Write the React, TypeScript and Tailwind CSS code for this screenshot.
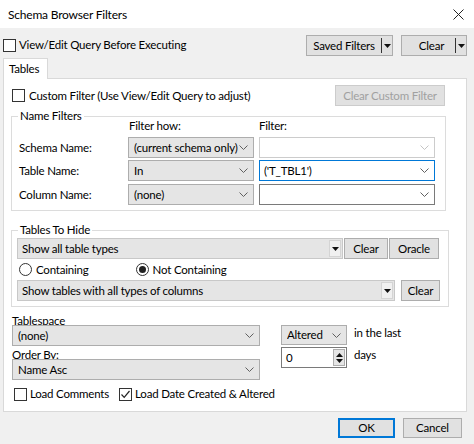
import React from "react"

const font = { fontFamily: 'Lato, "Noto Sans", sans-serif' }

function Chevron({ light }: { light?: boolean }) {
  return (
    <svg width="9" height="5" viewBox="0 0 9 5" className="shrink-0">
      <path d="M0.5 0.5 L4.5 4.5 L8.5 0.5" fill="none" stroke={light ? "#c4c4c4" : "#606060"} strokeWidth="1" />
    </svg>
  )
}

function Tri({ up }: { up?: boolean }) {
  return (
    <svg width="7" height="4" viewBox="0 0 7 4" className="shrink-0">
      <path d={up ? "M0 4 L3.5 0 L7 4 Z" : "M0 0 L7 0 L3.5 4 Z"} fill="#111" />
    </svg>
  )
}

function CheckBox({ checked }: { checked?: boolean }) {
  return (
    <span className="flex h-[13px] w-[13px] shrink-0 items-center justify-center border border-[#333] bg-white">
      {checked && (
        <svg width="11" height="11" viewBox="0 0 11 11">
          <path d="M1.5 5.5 L4.2 8.3 L9.5 2" fill="none" stroke="#222" strokeWidth="1.2" />
        </svg>
      )}
    </span>
  )
}

function Radio({ checked }: { checked?: boolean }) {
  return (
    <span className="flex h-[13px] w-[13px] shrink-0 items-center justify-center rounded-full border border-[#333] bg-white">
      {checked && <span className="h-[7px] w-[7px] rounded-full bg-[#222]" />}
    </span>
  )
}

// readonly windows combo (gray)
function Combo({ text, className }: { text: string; className: string }) {
  return (
    <div className={"flex h-[21px] items-center border border-[#adadad] bg-[#e5e5e5] pl-[5px] pr-[5px] " + className}>
      <span className="flex-1 overflow-hidden whitespace-nowrap">{text}</span>
      <Chevron />
    </div>
  )
}

function EditCombo({ text, className, focus, disabled }: { text?: string; className: string; focus?: boolean; disabled?: boolean }) {
  const border = focus ? "border-[#0078d7]" : disabled ? "border-[#cccccc]" : "border-[#7a7a7a]"
  return (
    <div className={"flex h-[21px] items-center border bg-white pl-[4px] pr-[5px] " + border + " " + className}>
      <span className="flex-1 overflow-hidden whitespace-nowrap">{text}</span>
      <Chevron light={disabled} />
    </div>
  )
}

// old style combo with a small dropdown button
function DropList({ text, className }: { text: string; className: string }) {
  return (
    <div className={"flex h-[21px] items-center border border-[#c8c8c8] bg-[#e5e5e5] pl-[4px] pr-[1px] " + className}>
      <span className="flex-1 overflow-hidden whitespace-nowrap">{text}</span>
      <span className="flex h-[17px] w-[12px] items-center justify-center border border-[#d4d4d4] bg-[#f0f0f0]">
        <Tri />
      </span>
    </div>
  )
}

function Btn({ children, className, disabled }: { children: React.ReactNode; className: string; disabled?: boolean }) {
  return (
    <div
      className={
        "flex items-center justify-center border bg-[#e1e1e1] " +
        (disabled ? "border-[#cccccc] bg-[#cccccc] text-[#a0a0a0] " : "border-[#adadad] ") +
        className
      }
    >
      {children}
    </div>
  )
}

function SplitBtn({ label, className }: { label: string; className: string }) {
  return (
    <div className={"flex h-[21px] items-center border border-[#adadad] bg-[#e1e1e1] " + className}>
      <span className="flex-1 text-center">{label}</span>
      <span className="h-[15px] w-px bg-[#333]" />
      <span className="flex h-[15px] w-[10px] items-center justify-center">
        <Tri />
      </span>
    </div>
  )
}

export default function App() {
  return (
    <div
      className="flex h-[444px] w-[474px] flex-col overflow-hidden bg-[#f0f0f0] text-[11.5px] leading-[16px] tracking-[-0.2px] text-black"
      style={font}
    >
      {/* title bar */}
      <div className="flex h-[28px] items-center justify-between bg-white pl-[8px] pr-[10px] pt-[1px]">
        <span className="text-[12px]">Schema Browser Filters</span>
        <svg width="11" height="11" viewBox="0 0 11 11">
          <path d="M0.5 0.5 L10.5 10.5 M10.5 0.5 L0.5 10.5" stroke="#222" strokeWidth="1" />
        </svg>
      </div>

      {/* toolbar */}
      <div className="flex h-[30px] items-start pl-[3px]">
        <label className="mt-[9px] flex items-center gap-[3px]">
          <CheckBox />
          <span>View/Edit Query Before Executing</span>
        </label>
        <SplitBtn label="Saved Filters" className="ml-auto mt-[7px] w-[87px]" />
        <SplitBtn label="Clear" className="ml-[8px] mr-[7px] mt-[7px] w-[66px] pl-[6px]" />
      </div>

      {/* tab strip */}
      <div className="flex h-[20px] pl-[3px]">
        <div className="relative z-10 flex h-[21px] w-[45px] items-center border border-b-0 border-[#d9d9d9] bg-white pl-[5px]">
          Tables
        </div>
      </div>

      {/* tab panel */}
      <div className="ml-[3px] flex h-[334px] w-[464px] flex-col border border-[#d9d9d9] bg-white">
        {/* custom filter row */}
        <div className="mt-[6px] flex h-[21px] items-center pl-[8px]">
          <label className="flex items-center gap-[4px]">
            <CheckBox />
            <span>Custom Filter (Use View/Edit Query to adjust)</span>
          </label>
          <Btn disabled className="ml-auto mr-[21px] h-[21px] w-[110px]">
            Clear Custom Filter
          </Btn>
        </div>

        {/* Name Filters */}
        <div className="relative ml-[7px] mt-[10px] w-[435px] border border-[#dcdcdc] pb-[5px] pt-[1px]">
          <span className="absolute -top-[9px] left-[6px] bg-white px-[2px]">Name Filters</span>
          <div className="flex h-[16px] items-center">
            <span className="ml-[117px] w-[130px]">Filter how:</span>
            <span>Filter:</span>
          </div>
          <div className="mt-[3px] flex flex-col gap-[2px] pl-[7px]">
            <div className="flex items-center">
              <span className="w-[109px]">Schema Name:</span>
              <Combo text="(current schema only)" className="w-[126px]" />
              <EditCombo disabled className="ml-[5px] w-[176px]" />
            </div>
            <div className="flex items-center">
              <span className="w-[109px]">Table Name:</span>
              <Combo text="In" className="w-[126px]" />
              <EditCombo focus text="('T_TBL1')" className="ml-[5px] w-[176px]" />
            </div>
            <div className="mt-[1px] flex items-center">
              <span className="w-[109px]">Column Name:</span>
              <Combo text="(none)" className="w-[126px]" />
              <EditCombo className="ml-[5px] w-[176px]" />
            </div>
          </div>
        </div>

        {/* Tables To Hide */}
        <div className="relative ml-[7px] mt-[19px] w-[438px] border border-[#dcdcdc] pb-[5px] pl-[5px] pt-[7px]">
          <span className="absolute -top-[9px] left-[6px] bg-white px-[2px]">Tables To Hide</span>
          <div className="flex items-center">
            <DropList text="Show all table types" className="w-[326px]" />
            <Btn className="ml-[1px] h-[21px] w-[44px]">Clear</Btn>
            <Btn className="ml-[1px] h-[21px] w-[50px]">Oracle</Btn>
          </div>
          <div className="flex h-[21px] items-center pl-[2px]">
            <label className="flex items-center gap-[4px]">
              <Radio />
              <span>Containing</span>
            </label>
            <label className="ml-[47px] flex items-center gap-[4px]">
              <Radio checked />
              <span>Not Containing</span>
            </label>
          </div>
          <div className="flex items-center">
            <DropList text="Show tables with all types of columns" className="w-[378px]" />
            <Btn className="ml-[6px] h-[21px] w-[39px]">Clear</Btn>
          </div>
        </div>

        {/* Tablespace / Order By */}
        <div className="mt-[5px] flex pl-[8px]">
          <div className="flex w-[248px] flex-col">
            <span className="h-[14px] leading-[17px]">
              Table<span className="underline">s</span>pace
            </span>
            <Combo text="(none)" className="mt-[-1px] w-[248px]" />
            <span className="h-[14px] leading-[17px]">
              Order B<span className="underline">y</span>:
            </span>
            <Combo text="Name Asc" className="mt-[-1px] w-[248px]" />
          </div>
          <div className="ml-[21px] mt-[13px] flex w-[66px] flex-col gap-[2px]">
            <Combo text="Altered" className="!h-[20px] w-[66px]" />
            <div className="flex h-[21px] items-center border border-[#7a7a7a] bg-white pl-[4px] pr-[1px]">
              <span className="flex-1">0</span>
              <span className="flex h-[17px] w-[12px] flex-col items-center justify-center gap-[2px] border border-[#adadad] bg-[#e5e5e5]">
                <Tri up />
                <Tri />
              </span>
            </div>
          </div>
          <div className="ml-[7px] mt-[13px] flex flex-col">
            <span className="h-[16px]">in the last</span>
            <span className="mt-[6px] h-[16px]">days</span>
          </div>
        </div>

        <div className="mt-[6px] flex items-center pl-[10px]">
          <label className="flex items-center gap-[3px]">
            <CheckBox />
            <span>Load Comments</span>
          </label>
          <label className="ml-[10px] flex items-center gap-[3px]">
            <CheckBox checked />
            <span>Load Date Created &amp; Altered</span>
          </label>
        </div>
      </div>

      {/* footer */}
      <div className="mt-[6px] flex justify-end pr-[12px]">
        <Btn className="h-[20px] w-[57px] border-2 !border-[#0078d7]">OK</Btn>
        <Btn className="ml-[8px] h-[20px] w-[59px]">Cancel</Btn>
      </div>
    </div>
  )
}
